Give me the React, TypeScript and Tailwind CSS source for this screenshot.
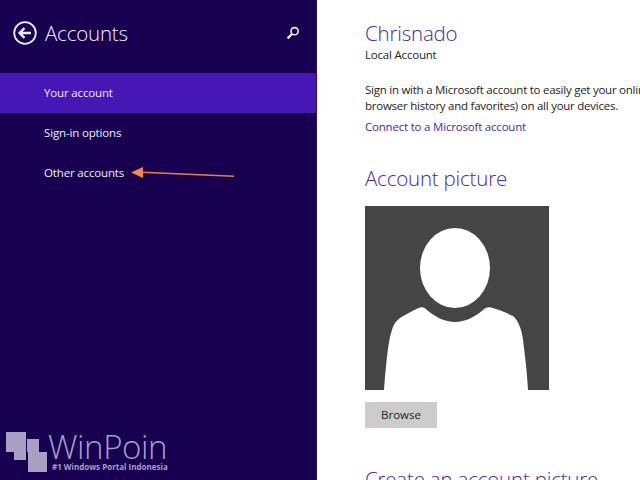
const FONT = "font-['Open_Sans','Noto_Sans',sans-serif]";

const NAV_ITEMS = [
  { label: "Your account", active: true },
  { label: "Sign-in options", active: false },
  { label: "Other accounts", active: false },
];

function BackIcon() {
  return (
    <svg width="24" height="24" viewBox="0 0 24 24" fill="none" stroke="#f1eef8">
      <circle cx="12" cy="12" r="10.8" strokeWidth="1.8" />
      <path d="M18 12H7M11.5 7.2 6.6 12l4.9 4.8" strokeWidth="2.4" />
    </svg>
  );
}

function SearchIcon() {
  return (
    <svg width="14" height="14" viewBox="0 0 14 14" fill="none" stroke="#f1eef8">
      <circle cx="8.6" cy="5.2" r="3.6" strokeWidth="1.6" />
      <path d="M6 8 1.6 12.4" strokeWidth="2.2" />
    </svg>
  );
}

function Avatar() {
  return (
    <svg width="184" height="184" viewBox="0 0 184 184" className="block">
      <rect width="184" height="184" fill="#454545" />
      <ellipse cx="90" cy="62" rx="35" ry="40" fill="#fff" />
      <path
        d="M19 184C21 160 23 135 27 124C29 116 34 112 40 109C46 106 50 103 55 101.5C58 100.5 60 102 62 104C70 111 80 116 90 116C100 116 110 111 118 104C120 102 123 100.5 126 101.5C132 103 140 106 148 110C153 114 157 124 158 134C160 150 162 165 163 184Z"
        fill="#fff"
      />
    </svg>
  );
}

function Arrow() {
  return (
    <svg width="106" height="14" viewBox="0 0 106 14" className="absolute left-[130px] top-[166px]">
      <path d="M12 6.2 104 10.2" stroke="#e8813f" strokeWidth="1.6" />
      <path d="M1 6.5 13 1V12Z" fill="#f08a45" />
    </svg>
  );
}

function Watermark() {
  return (
    <div className="absolute left-[6px] top-[432px] flex items-start">
      <div className="relative h-[40px] w-[42px] shrink-0">
        <div className="absolute left-0 top-0 h-[20px] w-[20px] bg-[#a79fc4]" />
        <div className="absolute left-[21px] top-[7px] h-[13px] w-[12px] bg-[#a79fc4]" />
        <div className="absolute left-[8px] top-[20px] h-[8px] w-[12px] bg-[#a79fc4]" />
        <div className="absolute left-[22px] top-[20px] h-[20px] w-[19px] bg-[#a79fc4]" />
      </div>
      <div className="flex flex-col text-[#a79fc4]">
        <span className="h-[30px] text-[33px] leading-[30px] tracking-[-0.4px] font-light">WinPoin</span>
        <span className="ml-[4px] text-[8px] leading-[10px] font-bold whitespace-nowrap">
          #1 Windows Portal Indonesia
        </span>
      </div>
    </div>
  );
}

export default function App() {
  return (
    <div className={`relative flex h-[480px] w-[640px] overflow-hidden bg-white ${FONT}`}>
      <aside className="flex h-full w-[317px] shrink-0 flex-col border-r border-[#2a1260] bg-[#170050] text-[#f1eef8]">
        <header className="flex h-[73px] items-start pl-[13px] pr-[16px] pt-[21px]">
          <BackIcon />
          <h1 className="ml-[8px] text-[20.5px] leading-[24px] tracking-[-0.2px] font-light">Accounts</h1>
          <span className="ml-auto mt-[5px]">
            <SearchIcon />
          </span>
        </header>
        <nav className="flex flex-col">
          {NAV_ITEMS.map(({ label, active }) => (
            <a
              key={label}
              className={`flex h-[40px] items-center pb-[1px] pl-[44px] text-[11.5px] tracking-[-0.15px] ${active ? "bg-[#4617b4]" : ""}`}
            >
              {label}
            </a>
          ))}
        </nav>
      </aside>

      <main className="flex-1 whitespace-nowrap pl-[48px] pt-[20px] text-[#222]">
        <h2 className="text-[20.5px] leading-[26px] tracking-[-0.2px] font-light text-[#4a2a96]">Chrisnado</h2>
        <p className="mt-[1px] text-[11.5px] leading-[16px] tracking-[-0.2px]">Local Account</p>
        <p className="mt-[19px] text-[11.5px] leading-[16px] tracking-[-0.25px]">
          Sign in with a Microsoft account to easily get your online
          <br />
          browser history and favorites) on all your devices.
        </p>
        <a className="mt-[5px] block text-[11.5px] leading-[16px] tracking-[-0.2px] text-[#4a2a96]">
          Connect to a Microsoft account
        </a>
        <h2 className="mt-[29px] text-[20.5px] leading-[28px] tracking-[-0.2px] font-light text-[#4a2a96]">
          Account picture
        </h2>
        <div className="mt-[14px]">
          <Avatar />
        </div>
        <button className="mt-[12px] block h-[26px] w-[72px] bg-[#cccccc] text-[11.5px] font-medium text-[#222]">
          Browse
        </button>
        <h2 className="mt-[37px] text-[20.5px] leading-[28px] tracking-[-0.2px] font-light text-[#4a2a96]">
          Create an account picture
        </h2>
      </main>

      <Arrow />
      <Watermark />
    </div>
  );
}
